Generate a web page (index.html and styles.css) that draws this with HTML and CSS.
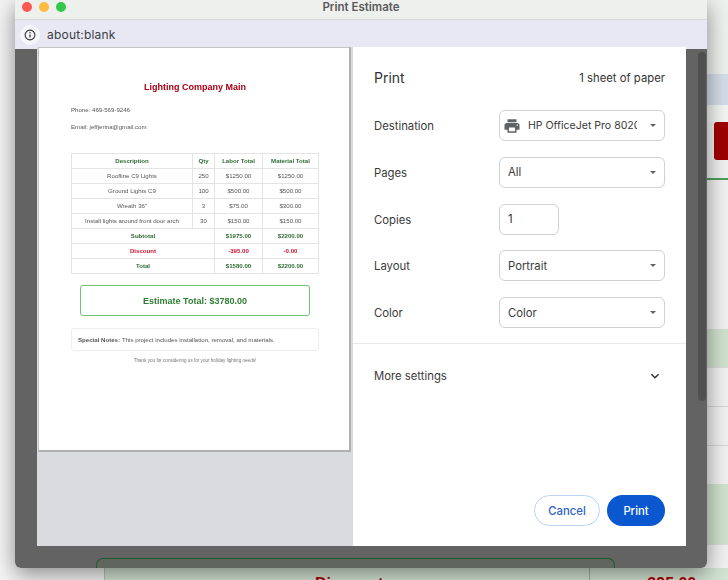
FILE: index.html
```html
<!DOCTYPE html>
<html lang="en">
<head>
    <meta charset="UTF-8">
    <meta name="viewport" content="width=device-width, initial-scale=1.0">
    <title>Print Estimate</title>
    <link rel="stylesheet" href="styles.css">
</head>
<body>

    <!-- the page behind the popup window -->
    <div class="behind-side">
        <div class="side-top"></div>
        <div class="side-band"></div>
        <div class="side-gap"></div>
        <div class="side-red"></div>
        <div class="side-line"></div>
        <div class="side-row side-row-tall"></div>
        <div class="side-green"></div>
        <div class="side-row"></div>
        <div class="side-row"></div>
        <div class="side-row side-row-mid"></div>
        <div class="side-green side-green-end"></div>
    </div>

    <div class="behind-bottom">
        <div class="bottom-label">Discount</div>
        <div class="bottom-value">-395.00</div>
    </div>

    <div class="window">
        <div class="titlebar">
            <div class="lights">
                <span class="light red"></span>
                <span class="light yellow"></span>
                <span class="light green"></span>
            </div>
            <div class="window-title">Print Estimate</div>
        </div>

        <div class="urlbar">
            <div class="info-badge">
                <svg width="12" height="12" viewBox="0 0 12 12">
                    <circle cx="6" cy="6" r="4.9" fill="none" stroke="#333" stroke-width="1.1"/>
                    <path d="M6 5.4v3" stroke="#333" stroke-width="1.2"/>
                    <circle cx="6" cy="3.8" r="0.7" fill="#333"/>
                </svg>
            </div>
            <span class="url">about:blank</span>
        </div>

        <div class="content">
            <div class="scrollbar"></div>
            <div class="ghost-box"></div>

            <div class="dialog">
                <div class="preview">
                    <div class="paper">
                        <h1 class="company">Lighting Company Main</h1>
                        <p class="contact">Phone: 469-569-9246</p>
                        <p class="contact contact-next">Email: jeffjerina@gmail.com</p>

                        <table class="estimate-table">
                            <colgroup>
                                <col class="col-desc">
                                <col class="col-qty">
                                <col class="col-labor">
                                <col class="col-material">
                            </colgroup>
                            <thead>
                                <tr><th>Description</th><th>Qty</th><th>Labor Total</th><th>Material Total</th></tr>
                            </thead>
                            <tbody>
                                <tr><td>Roofline C9 Lights</td><td>250</td><td>$1250.00</td><td>$1250.00</td></tr>
                                <tr><td>Ground Lights C9</td><td>100</td><td>$500.00</td><td>$500.00</td></tr>
                                <tr><td>Wreath 36"</td><td>3</td><td>$75.00</td><td>$300.00</td></tr>
                                <tr><td>Install lights around front door arch</td><td>30</td><td>$150.00</td><td>$150.00</td></tr>
                                <tr class="sum"><td colspan="2">Subtotal</td><td>$1975.00</td><td>$2200.00</td></tr>
                                <tr class="sum minus"><td colspan="2">Discount</td><td>-395.00</td><td>-0.00</td></tr>
                                <tr class="sum"><td colspan="2">Total</td><td>$1580.00</td><td>$2200.00</td></tr>
                            </tbody>
                        </table>

                        <div class="estimate-total">Estimate Total: $3780.00</div>
                        <div class="notes"><b>Special Notes:</b> This project includes installation, removal, and materials.</div>
                        <p class="thanks">Thank you for considering us for your holiday lighting needs!</p>
                    </div>
                </div>

                <div class="settings">
                    <div class="settings-head">
                        <span class="print-heading">Print</span>
                        <span class="sheets">1 sheet of paper</span>
                    </div>

                    <div class="setting">
                        <span class="setting-label">Destination</span>
                        <div class="select">
                            <svg class="printer" width="18" height="18" viewBox="0 0 24 24">
                                <path fill="#5f6368" d="M19 8H5c-1.66 0-3 1.34-3 3v6h4v4h12v-4h4v-6c0-1.66-1.34-3-3-3zm-3 11H8v-5h8v5zm3-7c-.55 0-1-.45-1-1s.45-1 1-1 1 .45 1 1-.45 1-1 1zm-1-9H6v4h12V3z"/>
                            </svg>
                            <span class="select-text dest-text">HP OfficeJet Pro 8020</span>
                            <span class="caret"></span>
                        </div>
                    </div>
                    <div class="setting">
                        <span class="setting-label">Pages</span>
                        <div class="select"><span class="select-text">All</span><span class="caret"></span></div>
                    </div>
                    <div class="setting">
                        <span class="setting-label">Copies</span>
                        <div class="copies">1</div>
                    </div>
                    <div class="setting">
                        <span class="setting-label">Layout</span>
                        <div class="select"><span class="select-text">Portrait</span><span class="caret"></span></div>
                    </div>
                    <div class="setting">
                        <span class="setting-label">Color</span>
                        <div class="select"><span class="select-text">Color</span><span class="caret"></span></div>
                    </div>

                    <div class="more">
                        <span class="setting-label">More settings</span>
                        <svg width="12" height="12" viewBox="0 0 12 12">
                            <path d="M2.4 4.2 6 7.8l3.6-3.6" fill="none" stroke="#333" stroke-width="1.5"/>
                        </svg>
                    </div>

                    <div class="actions">
                        <div class="btn btn-cancel">Cancel</div>
                        <div class="btn btn-print">Print</div>
                    </div>
                </div>
            </div>
        </div>
    </div>

</body>
</html>
```

FILE: styles.css
```css
html, body {
    margin: 0;
    padding: 0;
    height: 100%;
    overflow: hidden;
}

body {
    position: relative;
    width: 728px;
    height: 580px;
    background: #f4f5f4;
    font-family: "Inter", "Liberation Sans", sans-serif;
    color: #333;
}

/* page behind the popup */
.behind-side {
    position: absolute;
    top: 0;
    right: 0;
    width: 21px;
    height: 580px;
    background: #f1f1f1;
}

.side-top { height: 74px; background: #eef2ee; }
.side-band { height: 31px; background: #d5dde9; }
.side-gap { height: 17px; background: #f4f6f4; }

.side-red {
    height: 38px;
    margin-left: 7px;
    background: #a00000;
    border-radius: 3px 0 0 3px;
}

.side-line {
    height: 2px;
    margin-top: 18px;
    background: #4f9f58;
}

.side-row {
    height: 38px;
    border-bottom: 1px solid #d6d6d6;
}

.side-row-tall { height: 149px; border-bottom: 0; }
.side-row-mid { height: 38px; border-bottom: 0; }

.side-green {
    height: 38px;
    background: #d0e3ce;
    border-bottom: 1px solid #dcdcdc;
}

.side-green-end { height: 60px; }

.behind-bottom {
    position: absolute;
    left: 104px;
    right: 0;
    bottom: 0;
    height: 12px;
    overflow: hidden;
    background: #d3e4d2;
    border-left: 1px solid #b9c7b9;
    font-family: "Liberation Sans", sans-serif;
    font-size: 16px;
    font-weight: bold;
    color: #b00000;
}

.bottom-label {
    position: absolute;
    left: 210px;
    top: 7px;
}

.bottom-value {
    position: absolute;
    left: 537px;
    top: 7px;
}

.behind-bottom::after {
    content: "";
    position: absolute;
    left: 484px;
    top: 0;
    bottom: 0;
    border-left: 1px solid #9fb09f;
}

/* popup window */
.window {
    position: absolute;
    left: 15px;
    top: 0;
    width: 692px;
    height: 568px;
    display: flex;
    flex-direction: column;
    border-radius: 0 0 6px 6px;
    box-shadow: 0 6px 22px rgba(0, 0, 0, 0.45);
}

.titlebar {
    position: relative;
    height: 19px;
    flex: none;
    display: flex;
    align-items: center;
    justify-content: center;
    background: #eef0ee;
    border-bottom: 1px solid #d8d8dc;
}

.lights {
    position: absolute;
    left: 7px;
    top: 2px;
    display: flex;
    gap: 7px;
}

.light {
    width: 10px;
    height: 10px;
    border-radius: 50%;
}

.light.red { background: #fc5753; }
.light.yellow { background: #fdbc40; }
.light.green { background: #33c748; }

.window-title {
    margin-top: -5px;
    font-size: 11.5px;
    font-weight: 600;
    color: #5a5a5a;
}

.urlbar {
    height: 29px;
    flex: none;
    display: flex;
    align-items: center;
    gap: 7px;
    padding-left: 5px;
    background: #e8e8f4;
}

.info-badge {
    width: 20px;
    height: 20px;
    display: flex;
    align-items: center;
    justify-content: center;
    border-radius: 50%;
    background: #f5f5fb;
}

.url {
    font-size: 12px;
    letter-spacing: 0.2px;
    color: #3c3c44;
}

.content {
    position: relative;
    flex: 1;
    background: #636363;
    border-radius: 0 0 6px 6px;
}

.scrollbar {
    position: absolute;
    right: 1px;
    top: 3px;
    width: 8px;
    height: 349px;
    background: #505050;
    border-radius: 4px;
}

.ghost-box {
    position: absolute;
    left: 81px;
    bottom: 0;
    width: 517px;
    height: 9px;
    background: #5e665e;
    border: 1px solid #1f5a2a;
    border-bottom: 0;
    border-radius: 7px 7px 0 0;
}

/* print dialog */
.dialog {
    position: absolute;
    left: 22px;
    top: -2px;
    width: 649px;
    height: 499px;
    display: flex;
    background: #fff;
}

.preview {
    width: 316px;
    flex: none;
    background: #dadbde;
}

.paper {
    width: 313px;
    height: 405px;
    margin-left: 1px;
    box-sizing: border-box;
    padding: 0 30px 0 32px;
    background: #fff;
    border: 1px solid #c4c4c4;
    border-right: 2px solid #b0b0b0;
    border-bottom: 2px solid #b0b0b0;
    font-family: "Liberation Sans", sans-serif;
    color: #555;
}

/* the preview is a scaled down page, so its text is soft */
.paper > * {
    filter: blur(0.25px);
}

.company {
    margin: 34px 0 0;
    font-size: 9px;
    line-height: 10px;
    text-align: center;
    color: #a80014;
}

.contact {
    margin: 13px 0 0;
    font-size: 6.1px;
    line-height: 10px;
}

.contact-next { margin-top: 7px; }

.estimate-table {
    width: 247px;
    margin-top: 21px;
    border-collapse: collapse;
    table-layout: fixed;
    font-size: 6.1px;
    text-align: center;
}

.col-desc { width: 121px; }
.col-qty { width: 22px; }
.col-labor { width: 48px; }
.col-material { width: 56px; }

.estimate-table th,
.estimate-table td {
    height: 15px;
    padding: 0 0 1px;
    box-sizing: border-box;
    border: 1px solid #e4e4e4;
}

.estimate-table th { color: #2e6b34; }

.estimate-table .sum td {
    font-weight: bold;
    color: #2e6b34;
}

.estimate-table .sum.minus td { color: #c8102e; }

.estimate-total {
    height: 31px;
    margin: 11px 9px 0;
    box-sizing: border-box;
    display: flex;
    align-items: center;
    justify-content: center;
    border: 1px solid #6fc47c;
    border-radius: 3px;
    font-size: 9px;
    font-weight: bold;
    color: #2e7d32;
}

.notes {
    height: 23px;
    margin-top: 12px;
    box-sizing: border-box;
    display: flex;
    align-items: center;
    gap: 2px;
    padding-left: 6px;
    border: 1px solid #eee;
    border-radius: 3px;
    font-size: 6.1px;
}

.thanks {
    margin: 5px 0 0;
    font-size: 4.6px;
    line-height: 10px;
    text-align: center;
    color: #777;
}

.settings {
    flex: 1;
    display: flex;
    flex-direction: column;
    font-size: 11.3px;
}

.settings-head {
    height: 63px;
    flex: none;
    box-sizing: border-box;
    display: flex;
    align-items: center;
    justify-content: space-between;
    padding: 0 21px 2px;
}

.print-heading { font-size: 14px; }
.sheets { font-size: 11.3px; }

.setting {
    height: 46.75px;
    flex: none;
    box-sizing: border-box;
    display: flex;
    align-items: flex-start;
    padding-left: 21px;
}

.setting-label {
    color: #3a3a3a;
}

.setting > .setting-label {
    width: 125px;
    line-height: 33px;
}

.select {
    width: 166px;
    height: 31px;
    box-sizing: border-box;
    display: flex;
    align-items: center;
    padding: 0 8px;
    border: 1px solid #d0d0d0;
    border-radius: 6px;
}

.select-text {
    flex: 1;
    overflow: hidden;
    white-space: nowrap;
    color: #3a3a3a;
}

.printer {
    flex: none;
    margin: 0 7px 0 -5px;
}

.dest-text {
    flex: none;
    width: 109px;
    font-size: 10.55px;
}

.caret {
    flex: none;
    width: 0;
    height: 0;
    margin-left: auto;
    margin-right: 0;
    border-left: 3px solid transparent;
    border-right: 3px solid transparent;
    border-top: 3px solid #5f6368;
}

.copies {
    width: 60px;
    height: 31px;
    box-sizing: border-box;
    padding-left: 8px;
    line-height: 29px;
    border: 1px solid #d0d0d0;
    border-radius: 6px;
}

.more {
    height: 63px;
    flex: none;
    box-sizing: border-box;
    margin-top: -1px;
    padding: 2px 25px 0 21px;
    display: flex;
    align-items: center;
    justify-content: space-between;
    border-top: 1px solid #e8e8e8;
}

.actions {
    margin-top: auto;
    margin-bottom: 20px;
    display: flex;
    justify-content: flex-end;
    gap: 7px;
    padding-right: 21px;
}

.btn {
    height: 31px;
    box-sizing: border-box;
    display: flex;
    align-items: center;
    justify-content: center;
    border-radius: 16px;
    font-size: 11.3px;
    font-weight: 500;
}

.btn-cancel {
    width: 66px;
    border: 1px solid #bcd3f5;
    color: #2e62c4;
}

.btn-print {
    width: 58px;
    background: #0b57d0;
    color: #fff;
}
```
